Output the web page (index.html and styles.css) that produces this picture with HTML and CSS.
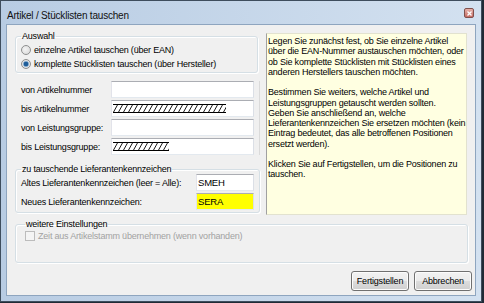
FILE: index.html
```html
<!DOCTYPE html>
<html lang="de">
<head>
    <meta charset="UTF-8">
    <title>Artikel / Stücklisten tauschen</title>
    <link rel="stylesheet" href="styles.css">
</head>
<body>
    <div class="window">
        <div class="titlebar">
            <span class="title">Artikel / Stücklisten tauschen</span>
            <span class="close">
                <svg width="5" height="5" viewBox="0 0 5 5"><path d="M0.5 0.5L4.5 4.5M4.5 0.5L0.5 4.5" stroke="#fff" stroke-width="1.3"/></svg>
            </span>
        </div>
        <div class="client">
            <div class="top">
                <div class="left">
                    <fieldset class="group auswahl">
                        <legend>Auswahl</legend>
                        <div class="option"><span class="radio"></span>einzelne Artikel tauschen (über EAN)</div>
                        <div class="option"><span class="radio checked"></span>komplette Stücklisten tauschen (über Hersteller)</div>
                    </fieldset>
                    <div class="fields">
                        <div class="row"><span class="label">von Artikelnummer</span><span class="input"></span></div>
                        <div class="row"><span class="label">bis Artikelnummer</span><span class="input">
                            <svg class="hatch" width="113" height="9">
                                <defs>
                                    <pattern id="slash" width="5" height="9" patternUnits="userSpaceOnUse">
                                        <path d="M0 9L5 0" stroke="#000" stroke-width="0.9"/>
                                    </pattern>
                                </defs>
                                <rect width="113" height="9" fill="url(#slash)"/>
                                <path d="M0 0.5H113M0 8.5H113" stroke="#000"/>
                            </svg>
                        </span></div>
                        <div class="row"><span class="label">von Leistungsgruppe:</span><span class="input"></span></div>
                        <div class="row"><span class="label">bis Leistungsgruppe:</span><span class="input">
                            <svg class="hatch" width="56" height="9">
                                <rect width="56" height="9" fill="url(#slash)"/>
                                <path d="M0 0.5H56M0 8.5H56" stroke="#000"/>
                            </svg>
                        </span></div>
                    </div>
                    <fieldset class="group kennz">
                        <legend>zu tauschende Lieferantenkennzeichen</legend>
                        <div class="row"><span class="label wide">Altes Lieferantenkennzeichen (leer = Alle):</span><span class="input small">SMEH</span></div>
                        <div class="row"><span class="label wide">Neues Lieferantenkennzeichen:</span><span class="input small marked">SERA</span></div>
                    </fieldset>
                </div>
                <div class="help">
                    <p>Legen Sie zunächst fest, ob Sie einzelne Artikel<br>über die EAN-Nummer austauschen möchten, oder<br>ob Sie komplette Stücklisten mit Stücklisten eines<br>anderen Herstellers tauschen möchten.</p>
                    <p>Bestimmen Sie weiters, welche Artikel und<br>Leistungsgruppen getauscht werden sollten.<br>Geben Sie anschließend an, welche<br>Lieferantenkennzeichen Sie ersetzen möchten (kein<br>Eintrag bedeutet, das alle betroffenen Positionen<br>ersetzt werden).</p>
                    <p>Klicken Sie auf Fertigstellen, um die Positionen zu<br>tauschen.</p>
                </div>
            </div>
            <fieldset class="group weitere">
                <legend>weitere Einstellungen</legend>
                <div class="option disabled"><span class="checkbox"></span>Zeit aus Artikelstamm übernehmen (wenn vorhanden)</div>
            </fieldset>
            <div class="footer">
                <button class="button">Fertigstellen</button>
                <button class="button">Abbrechen</button>
            </div>
        </div>
    </div>
</body>
</html>
```

FILE: styles.css
```css
* {
    box-sizing: border-box;
}
body {
    margin: 0;
    background: #202b36;
    font-family: "Liberation Sans", Arial, sans-serif;
    font-size: 9px;
    letter-spacing: -0.2px;
    color: #000;
}
.window {
    width: 482px;
    height: 302px;
    border: 1px solid #3e4d5d;
    background: linear-gradient(to right, #b8cce3, #d3e1f0);
    display: flex;
    flex-direction: column;
}
.titlebar {
    height: 24px;
    flex: none;
    display: flex;
    align-items: center;
    justify-content: space-between;
    padding: 0 7px 0 6px;
}
.title {
    font-size: 10px;
    padding-top: 4px;
    color: #111;
}
.close {
    width: 10px;
    height: 10px;
    border: 1px solid #80504c;
    border-radius: 2px;
    background: linear-gradient(#e6b0a8, #c56c64);
    display: flex;
    align-items: center;
    justify-content: center;
}
.client {
    flex: 1;
    margin: 0 6px 6px 6px;
    background: #f0f0f0;
    box-shadow: 0 0 0 1px #8ea5bf;
    padding: 8px 7px 0 8px;
    display: flex;
    flex-direction: column;
}
.top {
    display: flex;
    gap: 6px;
}
.left {
    width: 245px;
    flex: none;
}

/* group boxes */
.group {
    margin: 0;
    min-width: 0;
    border: 1px solid #d5dfe5;
    border-radius: 3px;
    box-shadow: inset 1px 1px 0 #fff, 1px 1px 0 #fff;
    padding: 0 5px;
}
.group legend {
    padding: 0 1px;
    line-height: 10px;
}
.auswahl {
    margin: -2px 2px 0 0;
    padding-top: 2px;
    padding-bottom: 2px;
}
.option {
    display: flex;
    align-items: center;
    height: 13px;
    gap: 3px;
    white-space: nowrap;
}
.option + .option {
    margin-top: 1px;
}
.radio {
    width: 10px;
    height: 10px;
    border-radius: 50%;
    border: 1px solid #8e8f8f;
    background: radial-gradient(circle at 40% 40%, #f4f4f4, #d6d6d6);
}
.radio.checked {
    background: radial-gradient(circle, #1f5d98 0 2px, #7ea6cc 2.5px, #e4e4e4 3.5px, #cfcfcf);
}

/* text rows */
.fields {
    margin-top: 8px;
    padding: 0 5px 0 6px;
    border-right: 1px solid #dadada;
    display: flex;
    flex-direction: column;
    gap: 2px;
}
.row {
    display: flex;
    align-items: center;
    height: 17px;
    white-space: nowrap;
}
.label {
    width: 90px;
}
.label.wide {
    width: 175px;
}
.input {
    width: 143px;
    height: 17px;
    background: #fff;
    border: 1px solid;
    border-color: #abadb3 #dbdfe6 #e3e9ef #e2e3ea;
    padding-left: 1px;
    display: flex;
    align-items: center;
}
.input.small {
    width: 58px;
    font-size: 9.5px;
}
.input.marked {
    background: #ffff00;
}
.hatch {
    display: block;
}
.kennz {
    margin-top: 9px;
    padding-bottom: 2px;
}
.kennz .row + .row {
    margin-top: 2px;
}

/* help text */
.help {
    width: 201px;
    height: 182px;
    flex: none;
    background: #ffffe1;
    border: 1px solid #e2e2cf;
    border-left-color: #a0a0a0;
    padding: 2px 1px;
    line-height: 10.25px;
    white-space: nowrap;
}
.help p {
    margin: 0 0 10.25px;
}

.weitere {
    margin-top: 4px;
    padding: 1px 5px 20px 9px;
}
.option.disabled {
    color: #a2a2a2;
    height: 12px;
}
.checkbox {
    width: 10px;
    height: 10px;
    border: 1px solid #bcbcbc;
    background: #f4f4f4;
}

/* buttons */
.footer {
    display: flex;
    justify-content: flex-end;
    gap: 5px;
    margin: 8px -4px 0 0;
}
.button {
    width: 58px;
    height: 20px;
    padding: 0;
    font: inherit;
    letter-spacing: inherit;
    color: #000;
    border: 1px solid #707070;
    border-radius: 3px;
    background: linear-gradient(#f2f2f2 0%, #ebebeb 50%, #dddddd 51%, #cfcfcf 100%);
    box-shadow: inset 0 0 0 1px #fcfcfc;
}
```
